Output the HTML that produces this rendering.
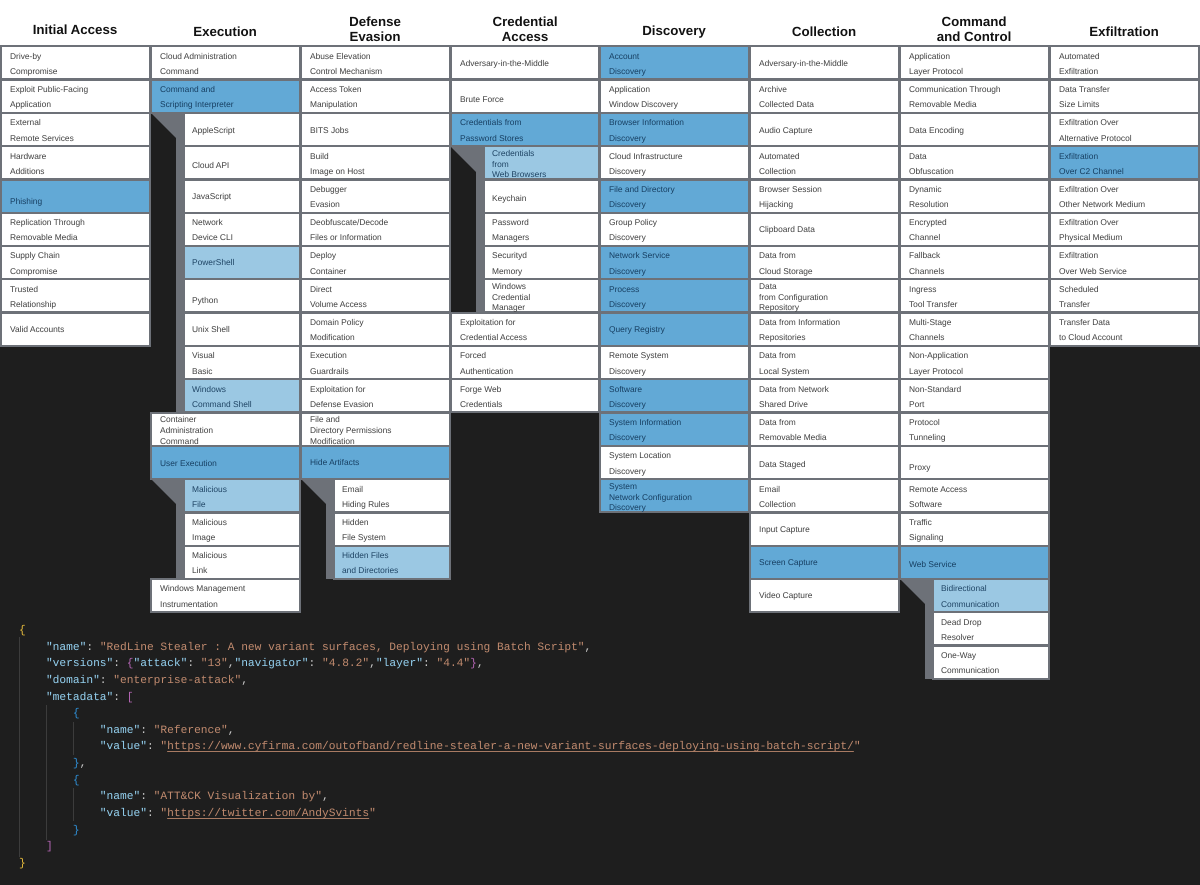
<!DOCTYPE html>
<html><head><meta charset="utf-8"><title>ATT&amp;CK</title>
<style>
html,body{margin:0;padding:0}
body{width:1200px;height:885px;background:#1e1e1e;position:relative;overflow:hidden;text-rendering:geometricPrecision}
#top{position:absolute;left:0;top:0;width:1200px;height:46px;background:#fff}
.h{position:absolute;width:150px;text-align:center;font:bold 13.3px/15px "Liberation Sans",sans-serif;color:#111}
.col{position:absolute;top:0;width:150px;height:0}
.c{position:absolute;left:0;box-sizing:border-box;width:151px;height:35px;border:2px solid #6d7178;background:#fff;padding:1.4px 0 0 8px;font:8.4px/15.3px "Liberation Sans",sans-serif;color:#404040;white-space:nowrap}
.s{left:33px;width:118px;padding-left:7px}
#c4 .c{width:150px}
#c4 .s{width:117px}
.b{background:#62a9d6;color:#173f62}
.l{background:#9bc8e3;color:#1f4464}
.m{padding-top:.7px;line-height:30px}
.z{padding-top:0}
.t{padding-top:.7px;line-height:10.7px}
.r0{top:45.3px}.r1{top:78.6px}.r2{top:111.9px}.r3{top:145.2px}.r4{top:178.5px}.r5{top:211.8px}.r6{top:245.1px}.r7{top:278.4px}.r8{top:311.7px}.r9{top:345px}.r10{top:378.3px}.r11{top:411.6px}.r12{top:444.9px}.r13{top:478.2px}.r14{top:511.5px}.r15{top:544.8px}.r16{top:578.1px}.r17{top:611.4px}.r18{top:644.7px}
svg.g{position:absolute;left:0;overflow:visible}
pre{position:absolute;left:19px;top:623px;margin:0;font:11.23px/16.62px "Liberation Mono",monospace;color:#c8c8c8}
.k{color:#93cfee}.v{color:#c08a6e}.y{color:#e6bb3c}.p{color:#b565b5}.u{color:#2f8fd6}
.v u{text-decoration-color:#a87a62;text-underline-offset:2px}
.gd{position:absolute;width:1px;background:#3c3c3c}
</style></head><body>
<div id="top"></div>
<div class="h" style="left:0;top:22px">Initial Access</div>
<div class="h" style="left:150px;top:24px">Execution</div>
<div class="h" style="left:300px;top:14px">Defense<br>Evasion</div>
<div class="h" style="left:450px;top:14px">Credential<br>Access</div>
<div class="h" style="left:599px;top:23px">Discovery</div>
<div class="h" style="left:749px;top:24px">Collection</div>
<div class="h" style="left:899px;top:14px">Command<br>and Control</div>
<div class="h" style="left:1049px;top:24px">Exfiltration</div>

<div class="col" style="left:0">
<div class="c r0">Drive-by<br>Compromise</div>
<div class="c r1">Exploit Public-Facing<br>Application</div>
<div class="c r2">External<br>Remote Services</div>
<div class="c r3">Hardware<br>Additions</div>
<div class="c r4 b m" style="padding-top:5.7px">Phishing</div>
<div class="c r5">Replication Through<br>Removable Media</div>
<div class="c r6">Supply Chain<br>Compromise</div>
<div class="c r7">Trusted<br>Relationship</div>
<div class="c r8 m">Valid Accounts</div>
</div>

<div class="col" style="left:150px">
<svg class="g" style="top:112px" width="34" height="301"><polygon points="0,0 34,0 34,301 26,301 26,26" fill="#6d7178"/></svg>
<svg class="g" style="top:478px" width="34" height="101"><polygon points="0,0 34,0 34,101 26,101 26,26" fill="#6d7178"/></svg>
<div class="c r0">Cloud Administration<br>Command</div>
<div class="c r1 b">Command and<br>Scripting Interpreter</div>
<div class="c s r2 m">AppleScript</div>
<div class="c s r3 m" style="padding-top:2.7px">Cloud API</div>
<div class="c s r4 m">JavaScript</div>
<div class="c s r5">Network<br>Device CLI</div>
<div class="c s r6 l m z">PowerShell</div>
<div class="c s r7 m" style="padding-top:4.7px">Python</div>
<div class="c s r8 m">Unix Shell</div>
<div class="c s r9">Visual<br>Basic</div>
<div class="c s r10 l">Windows<br>Command Shell</div>
<div class="c r11 t">Container<br>Administration<br>Command</div>
<div class="c r12 b m">User Execution</div>
<div class="c s r13 l">Malicious<br>File</div>
<div class="c s r14">Malicious<br>Image</div>
<div class="c s r15">Malicious<br>Link</div>
<div class="c r16">Windows Management<br>Instrumentation</div>
</div>

<div class="col" style="left:300px">
<svg class="g" style="top:478px" width="34" height="101"><polygon points="0,0 34,0 34,101 26,101 26,26" fill="#6d7178"/></svg>
<div class="c r0">Abuse Elevation<br>Control Mechanism</div>
<div class="c r1">Access Token<br>Manipulation</div>
<div class="c r2 m">BITS Jobs</div>
<div class="c r3">Build<br>Image on Host</div>
<div class="c r4">Debugger<br>Evasion</div>
<div class="c r5">Deobfuscate/Decode<br>Files or Information</div>
<div class="c r6">Deploy<br>Container</div>
<div class="c r7">Direct<br>Volume Access</div>
<div class="c r8">Domain Policy<br>Modification</div>
<div class="c r9">Execution<br>Guardrails</div>
<div class="c r10">Exploitation for<br>Defense Evasion</div>
<div class="c r11 t">File and<br>Directory Permissions<br>Modification</div>
<div class="c r12 b m z">Hide Artifacts</div>
<div class="c s r13">Email<br>Hiding Rules</div>
<div class="c s r14">Hidden<br>File System</div>
<div class="c s r15 l">Hidden Files<br>and Directories</div>
</div>

<div class="col" id="c4" style="left:450px">
<svg class="g" style="top:146px" width="34" height="167"><polygon points="0,0 34,0 34,167 26,167 26,26" fill="#6d7178"/></svg>
<div class="c r0 m">Adversary-in-the-Middle</div>
<div class="c r1 m" style="padding-top:3.7px">Brute Force</div>
<div class="c r2 b">Credentials from<br>Password Stores</div>
<div class="c s r3 l t">Credentials<br>from<br>Web Browsers</div>
<div class="c s r4 m" style="padding-top:2.7px">Keychain</div>
<div class="c s r5">Password<br>Managers</div>
<div class="c s r6">Securityd<br>Memory</div>
<div class="c s r7 t">Windows<br>Credential<br>Manager</div>
<div class="c r8">Exploitation for<br>Credential Access</div>
<div class="c r9">Forced<br>Authentication</div>
<div class="c r10">Forge Web<br>Credentials</div>
</div>

<div class="col" style="left:599px">
<div class="c r0 b">Account<br>Discovery</div>
<div class="c r1">Application<br>Window Discovery</div>
<div class="c r2 b">Browser Information<br>Discovery</div>
<div class="c r3">Cloud Infrastructure<br>Discovery</div>
<div class="c r4 b">File and Directory<br>Discovery</div>
<div class="c r5">Group Policy<br>Discovery</div>
<div class="c r6 b">Network Service<br>Discovery</div>
<div class="c r7 b">Process<br>Discovery</div>
<div class="c r8 b m">Query Registry</div>
<div class="c r9">Remote System<br>Discovery</div>
<div class="c r10 b">Software<br>Discovery</div>
<div class="c r11 b">System Information<br>Discovery</div>
<div class="c r12">System Location<br>Discovery</div>
<div class="c r13 b t">System<br>Network Configuration<br>Discovery</div>
</div>

<div class="col" style="left:749px">
<div class="c r0 m">Adversary-in-the-Middle</div>
<div class="c r1">Archive<br>Collected Data</div>
<div class="c r2 m">Audio Capture</div>
<div class="c r3">Automated<br>Collection</div>
<div class="c r4">Browser Session<br>Hijacking</div>
<div class="c r5 m">Clipboard Data</div>
<div class="c r6">Data from<br>Cloud Storage</div>
<div class="c r7 t">Data<br>from Configuration<br>Repository</div>
<div class="c r8">Data from Information<br>Repositories</div>
<div class="c r9">Data from<br>Local System</div>
<div class="c r10">Data from Network<br>Shared Drive</div>
<div class="c r11">Data from<br>Removable Media</div>
<div class="c r12 m" style="padding-top:1.7px">Data Staged</div>
<div class="c r13">Email<br>Collection</div>
<div class="c r14 m z">Input Capture</div>
<div class="c r15 b m">Screen Capture</div>
<div class="c r16 m z">Video Capture</div>
</div>

<div class="col" style="left:899px">
<svg class="g" style="top:578px" width="34" height="101"><polygon points="0,0 34,0 34,101 26,101 26,26" fill="#6d7178"/></svg>
<div class="c r0">Application<br>Layer Protocol</div>
<div class="c r1">Communication Through<br>Removable Media</div>
<div class="c r2 m">Data Encoding</div>
<div class="c r3">Data<br>Obfuscation</div>
<div class="c r4">Dynamic<br>Resolution</div>
<div class="c r5">Encrypted<br>Channel</div>
<div class="c r6">Fallback<br>Channels</div>
<div class="c r7">Ingress<br>Tool Transfer</div>
<div class="c r8">Multi-Stage<br>Channels</div>
<div class="c r9">Non-Application<br>Layer Protocol</div>
<div class="c r10">Non-Standard<br>Port</div>
<div class="c r11">Protocol<br>Tunneling</div>
<div class="c r12 m" style="padding-top:4.7px">Proxy</div>
<div class="c r13">Remote Access<br>Software</div>
<div class="c r14">Traffic<br>Signaling</div>
<div class="c r15 b m" style="padding-top:2.7px">Web Service</div>
<div class="c s r16 l">Bidirectional<br>Communication</div>
<div class="c s r17">Dead Drop<br>Resolver</div>
<div class="c s r18">One-Way<br>Communication</div>
</div>

<div class="col" style="left:1049px">
<div class="c r0">Automated<br>Exfiltration</div>
<div class="c r1">Data Transfer<br>Size Limits</div>
<div class="c r2">Exfiltration Over<br>Alternative Protocol</div>
<div class="c r3 b">Exfiltration<br>Over C2 Channel</div>
<div class="c r4">Exfiltration Over<br>Other Network Medium</div>
<div class="c r5">Exfiltration Over<br>Physical Medium</div>
<div class="c r6">Exfiltration<br>Over Web Service</div>
<div class="c r7">Scheduled<br>Transfer</div>
<div class="c r8">Transfer Data<br>to Cloud Account</div>
</div>

<div class="gd" style="left:19px;top:637px;height:220px"></div>
<div class="gd" style="left:46px;top:705px;height:135px"></div>
<div class="gd" style="left:73px;top:722px;height:33px"></div>
<div class="gd" style="left:73px;top:788px;height:33px"></div>
<pre><span class="y">{</span>
    <span class="k">"name"</span>: <span class="v">"RedLine Stealer : A new variant surfaces, Deploying using Batch Script"</span>,
    <span class="k">"versions"</span>: <span class="p">{</span><span class="k">"attack"</span>: <span class="v">"13"</span>,<span class="k">"navigator"</span>: <span class="v">"4.8.2"</span>,<span class="k">"layer"</span>: <span class="v">"4.4"</span><span class="p">}</span>,
    <span class="k">"domain"</span>: <span class="v">"enterprise-attack"</span>,
    <span class="k">"metadata"</span>: <span class="p">[</span>
        <span class="u">{</span>
            <span class="k">"name"</span>: <span class="v">"Reference"</span>,
            <span class="k">"value"</span>: <span class="v">"<u>https://www.cyfirma.com/outofband/redline-stealer-a-new-variant-surfaces-deploying-using-batch-script/</u>"</span>
        <span class="u">}</span>,
        <span class="u">{</span>
            <span class="k">"name"</span>: <span class="v">"ATT&amp;CK Visualization by"</span>,
            <span class="k">"value"</span>: <span class="v">"<u>https://twitter.com/AndySvints</u>"</span>
        <span class="u">}</span>
    <span class="p">]</span>
<span class="y">}</span></pre>
</body></html>
